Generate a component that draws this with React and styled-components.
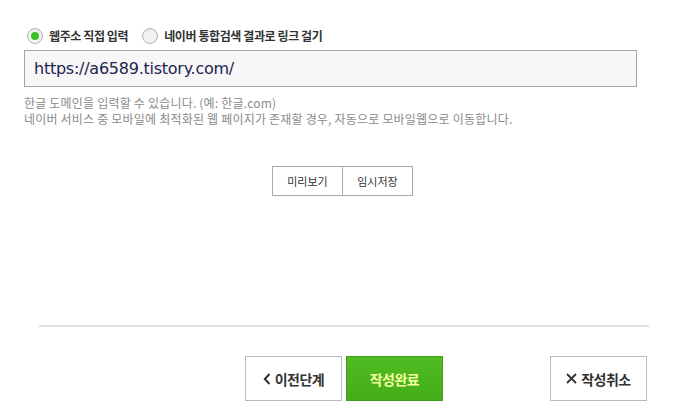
import styled, { createGlobalStyle } from "styled-components";

const GlobalStyle = createGlobalStyle`
  body {
    margin: 0;
    background: #ffffff;
    font-family: "Noto Sans CJK KR", "Noto Sans", sans-serif;
  }
`;

const Page = styled.div`
  width: 679px;
  height: 410px;
  overflow: hidden;
  padding-top: 27px;
  box-sizing: border-box;
`;

const RadioRow = styled.div`
  display: flex;
  align-items: center;
  gap: 14px;
  padding-left: 27px;
  height: 17px;
`;

const RadioLabel = styled.label`
  display: flex;
  align-items: center;
  gap: 6px;
  font-size: 12px;
  font-weight: 700;
  color: #333;
  letter-spacing: -0.4px;
`;

const RadioDot = styled.span`
  width: 14px;
  height: 14px;
  border-radius: 50%;
  border: 1px solid #b5b5b5;
  background: #f3f3f3;
  box-shadow: inset 0 1px 2px rgba(0, 0, 0, 0.08);
  display: flex;
  align-items: center;
  justify-content: center;
  &::after {
    content: "";
    width: 8px;
    height: 8px;
    border-radius: 50%;
    background: ${(p) => (p.$checked ? "#3fbf2a" : "transparent")};
  }
`;

const UrlInput = styled.div`
  margin: 6px 0 0 24px;
  width: 613px;
  height: 37px;
  box-sizing: border-box;
  border: 1px solid #a5a5a5;
  background: #f7f7f7;
  display: flex;
  align-items: center;
  padding-left: 9px;
  font-family: "DejaVu Sans", Verdana, sans-serif;
  font-size: 16px;
  letter-spacing: -0.25px;
  color: #232350;
`;

const Help = styled.p`
  margin: 8px 0 0 24px;
  font-size: 12px;
  line-height: 16px;
  color: #8a8a8a;
  letter-spacing: 0.2px;
`;

const ToolGroup = styled.div`
  display: flex;
  margin: 39px 0 0 272px;
`;

const ToolButton = styled.button`
  width: ${(p) => p.$w}px;
  height: 30px;
  margin-left: ${(p) => (p.$first ? 0 : -1)}px;
  border: 1px solid #a9a9b3;
  background: #ffffff;
  font-family: "Noto Sans CJK KR", sans-serif;
  font-size: 11px;
  color: #333;
  padding: 0;
`;

const Divider = styled.hr`
  margin: 129px 0 0 39px;
  width: 610px;
  border: none;
  border-top: 2px solid #e0e0e0;
`;

const Footer = styled.div`
  display: flex;
  margin: 29px 0 0 245px;
`;

const BigButton = styled.button`
  width: 97px;
  height: 45px;
  box-sizing: border-box;
  border: 1px solid #b8b8bf;
  background: #ffffff;
  font-family: "Noto Sans CJK KR", sans-serif;
  font-size: 14px;
  font-weight: 700;
  color: #333;
  display: flex;
  align-items: center;
  justify-content: center;
  gap: 4px;
  padding: 0;
  margin-right: ${(p) => p.$mr || 0}px;
  letter-spacing: -0.5px;
`;

const PrimaryButton = styled(BigButton)`
  border-color: #3f9f17;
  background: linear-gradient(#50bc22, #44ad19);
  color: #f6ff9e;
`;

const Icon = styled.svg`
  display: block;
`;

export default function App() {
  return (
    <Page>
      <GlobalStyle />
      <RadioRow>
        <RadioLabel>
          <RadioDot $checked />
          웹주소 직접 입력
        </RadioLabel>
        <RadioLabel>
          <RadioDot />
          네이버 통합검색 결과로 링크 걸기
        </RadioLabel>
      </RadioRow>
      <UrlInput>https://a6589.tistory.com/</UrlInput>
      <Help>
        한글 도메인을 입력할 수 있습니다. (예: 한글.com)
        <br />
        네이버 서비스 중 모바일에 최적화된 웹 페이지가 존재할 경우, 자동으로 모바일웹으로 이동합니다.
      </Help>
      <ToolGroup>
        <ToolButton $first $w={71}>미리보기</ToolButton>
        <ToolButton $w={71}>임시저장</ToolButton>
      </ToolGroup>
      <Divider />
      <Footer>
        <BigButton $mr={4}>
          <Icon width="8" height="12" viewBox="0 0 8 12">
            <path d="M6.5 1 L1.8 6 L6.5 11" fill="none" stroke="#333" strokeWidth="2" />
          </Icon>
          이전단계
        </BigButton>
        <PrimaryButton $mr={107}>작성완료</PrimaryButton>
        <BigButton>
          <Icon width="11" height="11" viewBox="0 0 11 11">
            <path d="M1 1 L10 10 M10 1 L1 10" fill="none" stroke="#333" strokeWidth="1.8" />
          </Icon>
          작성취소
        </BigButton>
      </Footer>
    </Page>
  );
}
